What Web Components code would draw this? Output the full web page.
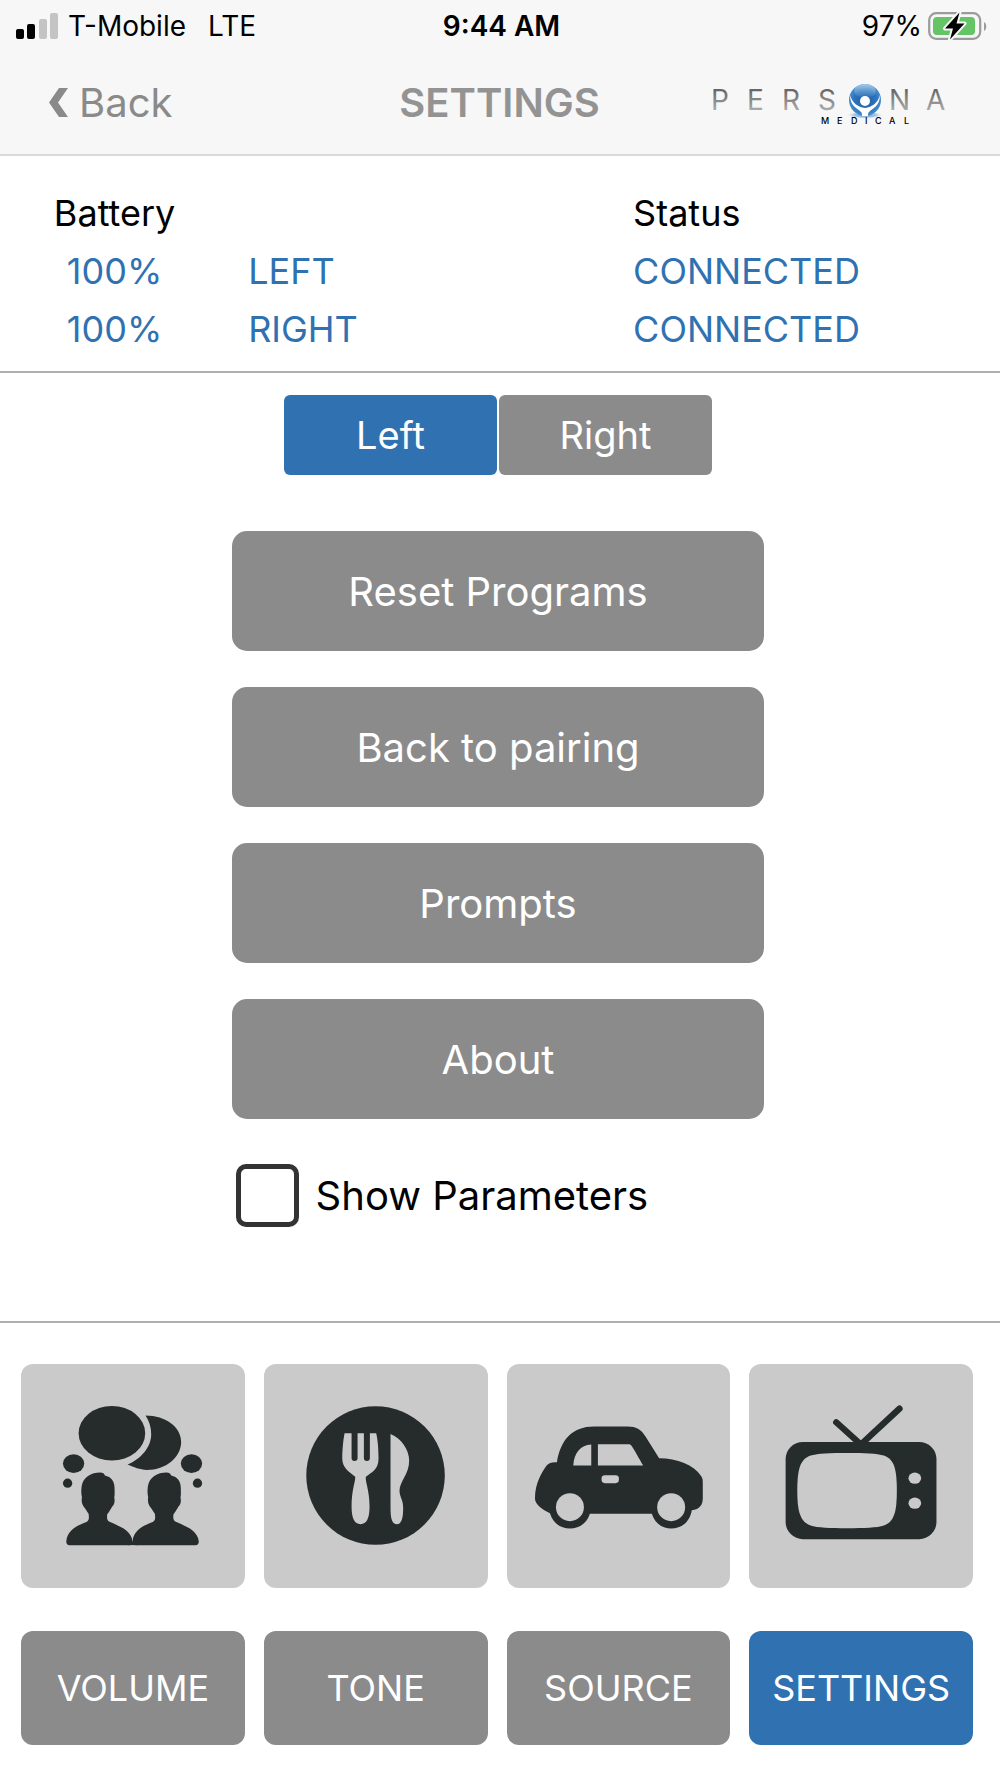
<!DOCTYPE html>
<html lang="en">
<head>
  <meta charset="utf-8">
  <meta name="viewport" content="width=device-width, initial-scale=1">
  <title>Settings</title>
  <style>
    :root {
      --blue: #3071b1;
      --gray: #8b8b8b;
      --tile: #cacaca;
      --ink: #262c2c;
      --line: #afafaf;
    }

    body {
      margin: 0;
      background-color: white;
      color: black;
      font-family: Inter, 'Liberation Sans', sans-serif;
    }
  </style>
</head>
<body>
  <settings-page></settings-page>

  <script>
    // StatusBar
    class StatusBar extends HTMLElement {
      constructor() {
        super();
        this.attachShadow({ mode: 'open' });
      }

      connectedCallback() {
        const carrier = this.getAttribute('carrier');
        const network = this.getAttribute('network');
        const battery = this.getAttribute('battery');

        this.shadowRoot.innerHTML = `
          <style>
            :host {
              display: grid;
              grid-template-columns: 1fr auto 1fr;
              align-items: center;
              height: 51px;
              padding: 0 13px 0 16px;
              font-size: 28px;
              line-height: 34px;
              white-space: nowrap;
            }

            .side {
              display: flex;
              align-items: center;
              gap: 10px;
            }

            .network {
              margin-left: 12px;
            }

            .end {
              justify-content: flex-end;
              gap: 6px;
            }

            .time {
              font-weight: 600;
            }

            svg {
              display: block;
              flex: none;
            }
          </style>

          <div class="side">
            <svg width="42" height="26" viewBox="0 0 42 26" aria-hidden="true">
              <rect x="0" y="16" width="8" height="10" rx="2"/>
              <rect x="11" y="11" width="8" height="15" rx="2"/>
              <rect x="23" y="6" width="8" height="20" rx="2" fill="#c4c4c4"/>
              <rect x="34" y="0" width="8" height="26" rx="2" fill="#c4c4c4"/>
            </svg>
            <span>${carrier}</span>
            <span class="network">${network}</span>
          </div>
          <span class="time"><slot></slot></span>
          <div class="side end">
            <span>${battery}</span>
            <svg width="59" height="30" viewBox="0 0 59 30" aria-hidden="true">
              <rect x="1.2" y="2.2" width="51" height="25.6" rx="7" fill="none" stroke="#9b9b9b" stroke-width="2.2"/>
              <path d="M56 11 C59 12.5 59 18.5 56 20 Z" fill="#9b9b9b"/>
              <rect x="5" y="6" width="42" height="18" rx="4" fill="#65c466"/>
              <path d="M31.5 1.5 L17 17.5 H25 L22 28.5 L36.5 12.5 H28.5 Z" fill="black" stroke="#f7f7f7" stroke-width="4" stroke-linejoin="round" paint-order="stroke"/>
            </svg>
          </div>
        `;
      }
    }

    // PersonaLogo
    class PersonaLogo extends HTMLElement {
      constructor() {
        super();
        this.attachShadow({ mode: 'open' });
      }

      connectedCallback() {
        this.shadowRoot.innerHTML = `
          <style>
            :host {
              display: block;
            }

            svg {
              display: block;
            }

            .name {
              font-size: 28px;
              font-weight: 400;
            }

            .sub {
              font-size: 9px;
              font-weight: 500;
            }
          </style>

          <svg width="238" height="44" viewBox="0 0 238 44">
            <defs>
              <linearGradient id="steel" x1="0" y1="9" x2="0" y2="29" gradientUnits="userSpaceOnUse">
                <stop offset="0" stop-color="#666"/>
                <stop offset="1" stop-color="#aaa"/>
              </linearGradient>
              <radialGradient id="orb" cx="0.5" cy="0.5" r="0.55">
                <stop offset="0" stop-color="#1d5ea8"/>
                <stop offset="0.6" stop-color="#2c72bb"/>
                <stop offset="1" stop-color="#4c93d3"/>
              </radialGradient>
              <linearGradient id="shine" x1="0" y1="0" x2="0" y2="1">
                <stop offset="0" stop-color="#bfdcf3" stop-opacity="0.8"/>
                <stop offset="1" stop-color="#7fb2df" stop-opacity="0.1"/>
              </linearGradient>
              <radialGradient id="glow">
                <stop offset="0" stop-color="#5a9bd4"/>
                <stop offset="0.6" stop-color="#a9c9e6"/>
                <stop offset="1" stop-color="white" stop-opacity="0"/>
              </radialGradient>
            </defs>
            <text class="name" fill="url(#steel)" y="29" x="-1 35 70 106 142 177 214">PERSONA</text>
            <ellipse cx="153" cy="34" rx="19" ry="4" fill="url(#glow)"/>
            <circle cx="153" cy="19" r="16" fill="url(#orb)"/>
            <ellipse cx="153" cy="10" rx="11" ry="7" fill="url(#shine)"/>
            <path d="M138 14 C138 25 145 27 149 31 C150 32 150 33 150 35 H156 C156 33 156 32 157 31 C161 27 168 25 168 14 C166 22 160 26 153 27 C146 26 140 22 138 14 Z" fill="white"/>
            <circle cx="153" cy="20" r="5" fill="white"/>
            <text class="sub" fill="black" y="43" x="109 125 139 153 163 177 192">MEDICAL</text>
          </svg>
        `;
      }
    }

    // NavBar
    class NavBar extends HTMLElement {
      constructor() {
        super();
        this.attachShadow({ mode: 'open' });
      }

      connectedCallback() {
        this.shadowRoot.innerHTML = `
          <style>
            :host {
              display: grid;
              grid-template-columns: 1fr auto 1fr;
              align-items: center;
              height: 103px;
              padding: 0 50px 0 49px;
              color: #8a8a8a;
            }

            button {
              display: flex;
              align-items: center;
              gap: 11px;
              justify-self: start;
              padding: 0;
              border: 0;
              background: none;
              color: inherit;
              font: inherit;
              font-size: 40px;
              line-height: 48px;
            }

            h1 {
              margin: 0;
              color: #939393;
              font-size: 40px;
              font-weight: 600;
              line-height: 48px;
            }

            persona-logo {
              justify-self: end;
            }
          </style>

          <button type="button">
            <svg width="19" height="29" viewBox="0 0 19 29" fill="currentColor" aria-hidden="true">
              <path d="M10 0 H19 L9 14.500 L19 29 H10 L0 14.500 Z"/>
            </svg>
            Back
          </button>
          <h1><slot></slot></h1>
          <persona-logo></persona-logo>
        `;
      }
    }

    // DeviceStatus
    class DeviceStatus extends HTMLElement {
      constructor() {
        super();
        this.attachShadow({ mode: 'open' });
      }

      connectedCallback() {
        const devices = JSON.parse(this.getAttribute('devices') || '[]');

        this.shadowRoot.innerHTML = `
          <style>
            :host {
              display: block;
              padding: 28px 54px 13px 52px;
              border-bottom: 2px solid var(--line);
            }

            table {
              width: 100%;
              table-layout: fixed;
              border-collapse: collapse;
              font-size: 36px;
              line-height: 58px;
              text-align: left;
              white-space: nowrap;
            }

            th, td {
              padding: 0;
              font-weight: 400;
            }

            tbody {
              color: var(--blue);
            }

            .battery {
              width: 14%;
              text-align: center;
            }

            .side {
              width: 51%;
              padding-left: 71px;
              box-sizing: border-box;
            }
          </style>

          <table>
            <thead>
              <tr>
                <th class="battery" scope="col">Battery</th>
                <td class="side"></td>
                <th scope="col">Status</th>
              </tr>
            </thead>
            <tbody>
              ${devices.map(device => `
                <tr>
                  <td class="battery">${device.battery}</td>
                  <td class="side">${device.side}</td>
                  <td>${device.status}</td>
                </tr>
              `).join('')}
            </tbody>
          </table>
        `;
      }
    }

    // AppButton, variants: toggle, wide, tab
    class AppButton extends HTMLElement {
      constructor() {
        super();
        this.attachShadow({ mode: 'open' });
      }

      connectedCallback() {
        const pressed = this.hasAttribute('active');

        this.shadowRoot.innerHTML = `
          <style>
            :host {
              display: block;
            }

            button {
              display: block;
              width: 100%;
              height: 120px;
              padding: 0;
              border: 0;
              border-radius: 15px;
              background-color: var(--gray);
              color: white;
              font: inherit;
              font-size: 40px;
            }

            :host([variant="toggle"]) button {
              height: 80px;
              border-radius: 6px;
              font-size: 38px;
            }

            :host([variant="tab"]) button {
              height: 114px;
              border-radius: 12px;
              font-size: 36px;
            }

            :host([active]) button {
              background-color: var(--blue);
            }
          </style>

          <button type="button" aria-pressed="${pressed}"><slot></slot></button>
        `;
      }
    }

    // CheckOption
    class CheckOption extends HTMLElement {
      constructor() {
        super();
        this.attachShadow({ mode: 'open' });
      }

      connectedCallback() {
        this.shadowRoot.innerHTML = `
          <style>
            :host {
              display: block;
            }

            label {
              display: flex;
              align-items: center;
              gap: 17px;
              font-size: 40px;
              line-height: 48px;
              white-space: nowrap;
            }

            input {
              appearance: none;
              flex: none;
              width: 63px;
              height: 63px;
              margin: 0;
              border: 5px solid #333;
              border-radius: 10px;
              background-color: white;
            }

            input:checked {
              background-color: var(--blue);
            }
          </style>

          <label>
            <input type="checkbox">
            <slot></slot>
          </label>
        `;
      }
    }

    // ProgramTile
    class ProgramTile extends HTMLElement {
      constructor() {
        super();
        this.attachShadow({ mode: 'open' });
      }

      connectedCallback() {
        const icon = this.getAttribute('icon');

        this.shadowRoot.innerHTML = `
          <style>
            :host {
              display: block;
            }

            button {
              display: block;
              width: 100%;
              aspect-ratio: 1;
              padding: 0;
              border: 0;
              border-radius: 12px;
              background-color: var(--tile);
              color: var(--ink);
            }

            svg {
              display: block;
              width: 100%;
              height: 100%;
            }

            .cut {
              fill: var(--tile);
            }
          </style>

          <button type="button" aria-label="${icon}">
            <svg viewBox="0 0 672 672" fill="currentColor" aria-hidden="true">${this.getIcon(icon)}</svg>
          </button>
        `;
      }

      getIcon(icon) {
        const person = 'M146 544 Q136 544 136 533 C139 498 168 486 198 474 C206 469 204 458 203 450 C196 440 193 433 188 428 C183 421 181 412 183 400 C180 388 181 378 182 368 C186 340 211 326 238 326 C246 326 250 330 252 335 C271 339 281 353 281 373 C281 386 282 393 280 400 C283 413 280 422 274 428 C269 436 266 443 259 451 C258 460 257 469 266 474 C296 488 331 498 335 533 Q335 544 325 544 Z';

        const icons = {
          'conversation': `
            <ellipse cx="273" cy="208" rx="100" ry="82"/>
            <path d="M374 155 C435 155 481 190 481 234 C481 280 435 318 378 318 C356 318 340 310 320 302 C360 285 391 250 391 211 C391 190 385 172 374 155 Z"/>
            <ellipse cx="158" cy="299" rx="32" ry="28"/>
            <ellipse cx="512" cy="299" rx="32" ry="28"/>
            <circle cx="140" cy="358" r="14"/>
            <circle cx="530" cy="358" r="14"/>
            <path d="${person}"/>
            <path d="${person}" transform="translate(199 0)"/>
            <rect x="320" y="534" width="30" height="10"/>
          `,
          'restaurant': `
            <circle cx="335" cy="335" r="208"/>
            <path class="cut" d="M242 208 H263 V282 a9 9 0 0 0 18 0 V208 H300 V282 a9 9 0 0 0 18 0 V208 H337 C342 228 344 258 344 284 C344 318 323 325 306 339 C303 353 317 378 317 428 C317 463 308 481 290 481 C272 481 263 463 263 428 C263 378 275 353 274 339 C257 325 235 313 235 284 C235 258 238 228 242 208 Z"/>
            <path class="cut" d="M380 210 C413 223 436 258 436 290 C436 333 406 353 407 383 C409 403 418 408 418 433 C418 463 413 481 399 481 C386 481 380 468 380 433 Z"/>
          `,
          'car': `
            <path d="M150 295 C161 228 196 188 261 188 L361 188 C391 188 403 198 416 218 L457 283 C511 283 561 303 583 336 C588 343 588 348 588 358 L588 403 C588 423 579 436 555 439 C549 473 526 494 493 494 C464 494 443 476 435 450 L249 450 C241 476 219 494 189 494 C159 494 137 476 129 448 C106 436 84 423 84 403 C84 358 106 323 119 305 C127 296 136 294 150 295 Z"/>
            <path class="cut" d="M199 305 C201 268 221 243 253 242 V305 Z"/>
            <path class="cut" d="M273 241 H368 C375 244 379 252 409 305 H273 Z"/>
            <rect class="cut" x="284" y="334" width="52" height="24" rx="10"/>
            <circle class="cut" cx="189" cy="430" r="42"/>
            <circle class="cut" cx="493" cy="430" r="42"/>
          `,
          'television': `
            <path d="M262 175 L336 242 L452 134" fill="none" stroke="currentColor" stroke-width="19" stroke-linecap="round"/>
            <rect x="110" y="234" width="453" height="292" rx="52"/>
            <path class="cut" d="M295 267 C345 267 385 268 405 275 C436 286 444 316 444 380 C444 444 436 474 405 485 C385 492 345 493 295 493 C245 493 205 492 185 485 C154 474 145 444 145 380 C145 316 154 286 185 275 C205 268 245 267 295 267 Z"/>
            <ellipse class="cut" cx="498" cy="343" rx="19" ry="17"/>
            <ellipse class="cut" cx="498" cy="418" rx="19" ry="17"/>
          `
        };

        return icons[icon] || '';
      }
    }

    // SettingsPage
    class SettingsPage extends HTMLElement {
      constructor() {
        super();
        this.attachShadow({ mode: 'open' });
      }

      connectedCallback() {
        const devices = [
          { battery: '100%', side: 'LEFT', status: 'CONNECTED' },
          { battery: '100%', side: 'RIGHT', status: 'CONNECTED' }
        ];

        this.shadowRoot.innerHTML = `
          <style>
            :host {
              display: block;
            }

            header {
              background-color: #f7f7f7;
              border-bottom: 2px solid #dadada;
            }

            main {
              display: flex;
              flex-direction: column;
              align-items: center;
              padding: 22px 4px 94px 0;
              border-bottom: 2px solid var(--line);
            }

            .toggle {
              display: grid;
              grid-template-columns: 1fr 1fr;
              gap: 2px;
              width: 43%;
              margin-bottom: 56px;
            }

            .stack {
              display: flex;
              flex-direction: column;
              gap: 36px;
              width: 53.5%;
            }

            check-option {
              margin-top: 9px;
              padding-left: 4px;
            }

            footer {
              display: grid;
              gap: 43px;
              padding: 41px 27px 33px 21px;
            }

            .row {
              display: grid;
              grid-template-columns: repeat(4, 1fr);
              gap: 19px;
            }
          </style>

          <header>
            <status-bar carrier="T-Mobile" network="LTE" battery="97%">9:44 AM</status-bar>
            <nav-bar>SETTINGS</nav-bar>
          </header>

          <device-status devices='${JSON.stringify(devices)}'></device-status>

          <main>
            <div class="toggle">
              <app-button variant="toggle" active>Left</app-button>
              <app-button variant="toggle">Right</app-button>
            </div>
            <div class="stack">
              <app-button variant="wide">Reset Programs</app-button>
              <app-button variant="wide">Back to pairing</app-button>
              <app-button variant="wide">Prompts</app-button>
              <app-button variant="wide">About</app-button>
              <check-option>Show Parameters</check-option>
            </div>
          </main>

          <footer>
            <div class="row">
              <program-tile icon="conversation"></program-tile>
              <program-tile icon="restaurant"></program-tile>
              <program-tile icon="car"></program-tile>
              <program-tile icon="television"></program-tile>
            </div>
            <nav class="row">
              <app-button variant="tab">VOLUME</app-button>
              <app-button variant="tab">TONE</app-button>
              <app-button variant="tab">SOURCE</app-button>
              <app-button variant="tab" active>SETTINGS</app-button>
            </nav>
          </footer>
        `;
      }
    }

    customElements.define('status-bar', StatusBar);
    customElements.define('persona-logo', PersonaLogo);
    customElements.define('nav-bar', NavBar);
    customElements.define('device-status', DeviceStatus);
    customElements.define('app-button', AppButton);
    customElements.define('check-option', CheckOption);
    customElements.define('program-tile', ProgramTile);
    customElements.define('settings-page', SettingsPage);
  </script>
</body>
</html>
